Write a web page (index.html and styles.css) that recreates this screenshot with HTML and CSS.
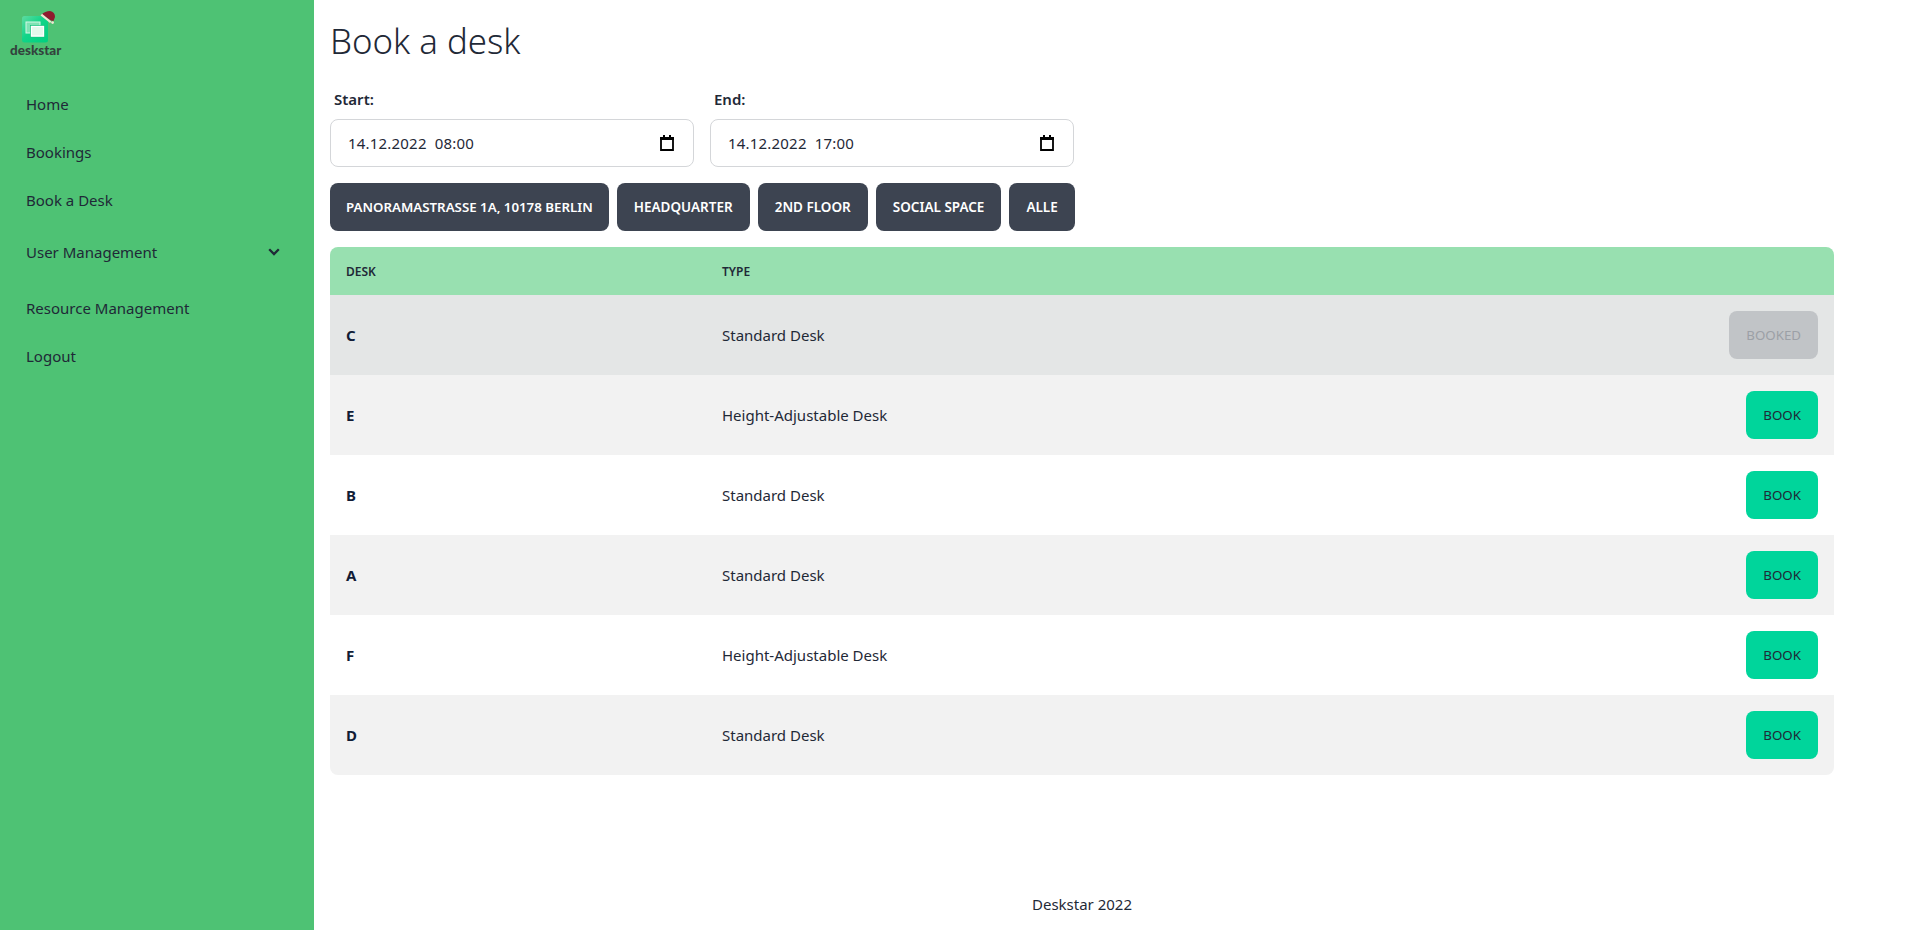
FILE: index.html
```html
<!DOCTYPE html>
<html lang="en">

<head>
    <meta charset="UTF-8">
    <meta name="viewport" content="width=device-width, initial-scale=1.0">
    <title>Book a desk</title>
    <link rel="stylesheet" href="styles.css">
</head>

<body>
    <div class="sidebar">
        <div class="logo">
            <svg class="logo-mark" width="36" height="32" viewBox="0 0 36 32">
                <defs>
                    <linearGradient id="logoFill" x1="0" y1="0" x2="1" y2="1">
                        <stop offset="0" stop-color="#5fdba0" />
                        <stop offset="0.45" stop-color="#12d488" />
                        <stop offset="1" stop-color="#00cf7f" />
                    </linearGradient>
                </defs>
                <rect x="1" y="5" width="26" height="26.5" rx="2.5" fill="url(#logoFill)" />
                <rect x="5" y="11" width="14" height="11" fill="#7fe3b4" stroke="#d6f7e6" stroke-width="1" />
                <rect x="9.5" y="14.5" width="14" height="11.5" fill="#e4f8ec" stroke="#15c47f" stroke-width="0.8" />
                <rect x="10.5" y="15.5" width="12" height="9.5" fill="#e4f8ec" stroke="#fff" stroke-width="1.2" />
                <path d="M20.5 3.5 Q24 0 29 0 Q34 1 34 6 L32.5 10 L30 9.5 Z" fill="#8e1c2e" />
                <path d="M19.6 4.4 L21 2.8 L30.4 10.4 L29 12 Z" fill="#f1e6d2" />
                <circle cx="31.6" cy="11.6" r="1.4" fill="#f1e6d2" />
            </svg>
            <div class="logo-text">deskstar</div>
        </div>
        <a class="nav-item">Home</a>
        <a class="nav-item">Bookings</a>
        <a class="nav-item">Book a Desk</a>
        <a class="nav-item nav-group">
            User Management
            <svg width="14" height="14" viewBox="0 0 14 14">
                <path d="M2.2 4.3 L7 9.1 L11.8 4.3" fill="none" stroke="#1f2937" stroke-width="2.3" />
            </svg>
        </a>
        <a class="nav-item">Resource Management</a>
        <a class="nav-item">Logout</a>
    </div>

    <div class="main">
        <h1 class="title">Book a desk</h1>

        <div class="dates">
            <div class="field">
                <label class="field-label">Start:</label>
                <div class="date-input">
                    <span>14.12.2022 08:00</span>
                    <svg width="14" height="16" viewBox="0 0 14 16">
                        <path d="M1 3 H13 V15 H1 Z" fill="none" stroke="#000" stroke-width="1.8" />
                        <path d="M0 2 H14 V5 H0 Z" fill="#000" />
                        <path d="M3 0 H5 V3 H3 Z M9 0 H11 V3 H9 Z" fill="#000" />
                    </svg>
                </div>
            </div>
            <div class="field">
                <label class="field-label">End:</label>
                <div class="date-input">
                    <span>14.12.2022 17:00</span>
                    <svg width="14" height="16" viewBox="0 0 14 16">
                        <path d="M1 3 H13 V15 H1 Z" fill="none" stroke="#000" stroke-width="1.8" />
                        <path d="M0 2 H14 V5 H0 Z" fill="#000" />
                        <path d="M3 0 H5 V3 H3 Z M9 0 H11 V3 H9 Z" fill="#000" />
                    </svg>
                </div>
            </div>
        </div>

        <div class="filters">
            <button class="filter-btn filter-wide">Panoramastrasse 1a, 10178 Berlin</button>
            <button class="filter-btn">Headquarter</button>
            <button class="filter-btn">2nd Floor</button>
            <button class="filter-btn">Social Space</button>
            <button class="filter-btn">Alle</button>
        </div>

        <table class="desks">
            <thead>
                <tr>
                    <th class="col-desk">Desk</th>
                    <th>Type</th>
                    <th></th>
                </tr>
            </thead>
            <tbody>
                <tr class="row-booked">
                    <td class="desk-name">C</td>
                    <td>Standard Desk</td>
                    <td class="cell-action"><button class="book-btn booked">Booked</button></td>
                </tr>
                <tr class="row-grey">
                    <td class="desk-name">E</td>
                    <td>Height-Adjustable Desk</td>
                    <td class="cell-action"><button class="book-btn">Book</button></td>
                </tr>
                <tr>
                    <td class="desk-name">B</td>
                    <td>Standard Desk</td>
                    <td class="cell-action"><button class="book-btn">Book</button></td>
                </tr>
                <tr class="row-grey">
                    <td class="desk-name">A</td>
                    <td>Standard Desk</td>
                    <td class="cell-action"><button class="book-btn">Book</button></td>
                </tr>
                <tr>
                    <td class="desk-name">F</td>
                    <td>Height-Adjustable Desk</td>
                    <td class="cell-action"><button class="book-btn">Book</button></td>
                </tr>
                <tr class="row-grey">
                    <td class="desk-name">D</td>
                    <td>Standard Desk</td>
                    <td class="cell-action"><button class="book-btn">Book</button></td>
                </tr>
            </tbody>
        </table>

        <div class="footer">Deskstar 2022</div>
    </div>
</body>

</html>
```

FILE: styles.css
```css
* {
    box-sizing: border-box;
}

html,
body {
    margin: 0;
    height: 100%;
}

body {
    display: flex;
    height: 930px;
    overflow: hidden;
    font-family: "Noto Sans", "Open Sans", sans-serif;
    font-size: 15px;
    color: #1f2937;
    background-color: #fff;
}

.sidebar {
    width: 314px;
    flex-shrink: 0;
    background-color: #4ec274;
}

.logo {
    height: 80px;
    padding: 11px 0 0 10px;
}

.logo-mark {
    display: block;
    margin-left: 11px;
    overflow: visible;
}

.logo-text {
    width: 56px;
    margin-top: 1px;
    font-family: "Lato", sans-serif;
    font-size: 13.5px;
    font-weight: 900;
    line-height: 12px;
    color: #33423d;
}

.nav-item {
    display: flex;
    justify-content: space-between;
    align-items: center;
    height: 48px;
    padding: 0 33px 0 26px;
}

.nav-group {
    height: 60px;
    padding-bottom: 4px;
}

.main {
    flex: 1;
    display: flex;
    flex-direction: column;
    padding: 0 76px 0 16px;
}

.title {
    margin: 16px 0 0;
    font-size: 34.8px;
    font-weight: 300;
    line-height: 50px;
}

.dates {
    display: flex;
    gap: 16px;
    margin-top: 15px;
}

.field {
    width: 364px;
}

.field-label {
    display: block;
    padding: 8px 4px 10px;
    font-size: 15px;
    font-weight: 600;
    line-height: 20px;
}

.date-input {
    display: flex;
    justify-content: space-between;
    align-items: center;
    height: 48px;
    padding: 0 19px 0 17px;
    border: 1px solid #d4d6d9;
    border-radius: 8px;
    letter-spacing: 0.2px;
    word-spacing: 4px;
}

.filters {
    display: flex;
    gap: 8px;
    margin-top: 16px;
}

.filter-btn {
    height: 48px;
    padding: 0 17px;
    border: none;
    border-radius: 8px;
    background-color: #3d4451;
    color: #fff;
    font-family: inherit;
    font-size: 13.5px;
    font-weight: 600;
    text-transform: uppercase;
}

.filter-wide {
    padding: 0 16px;
    font-size: 13.3px;
}

.desks {
    width: 1504px;
    margin-top: 16px;
    border-collapse: separate;
    border-spacing: 0;
}

.desks th {
    height: 48px;
    padding: 0 16px;
    background-color: #98e0b0;
    font-size: 12px;
    font-weight: 600;
    text-align: left;
    text-transform: uppercase;
}

.desks th:first-child {
    border-top-left-radius: 8px;
}

.desks th:last-child {
    border-top-right-radius: 8px;
}

.col-desk {
    width: 376px;
}

.desks td {
    height: 80px;
    padding: 0 16px;
}

.desks tr:last-child td:first-child {
    border-bottom-left-radius: 8px;
}

.desks tr:last-child td:last-child {
    border-bottom-right-radius: 8px;
}

.row-booked td {
    background-color: #e4e6e6;
}

.row-grey td {
    background-color: #f2f2f2;
}

.desks .desk-name {
    font-weight: 700;
    color: #111c36;
}

.cell-action {
    text-align: right;
}

.book-btn {
    height: 48px;
    padding: 0 17px;
    border: none;
    border-radius: 8px;
    background-color: #00d59b;
    color: #1f2937;
    font-family: inherit;
    font-size: 13.3px;
    text-transform: uppercase;
}

.booked {
    background-color: #c1c4c7;
    color: #9ca0a6;
}

.footer {
    margin-top: auto;
    padding-bottom: 16px;
    text-align: center;
}
```
